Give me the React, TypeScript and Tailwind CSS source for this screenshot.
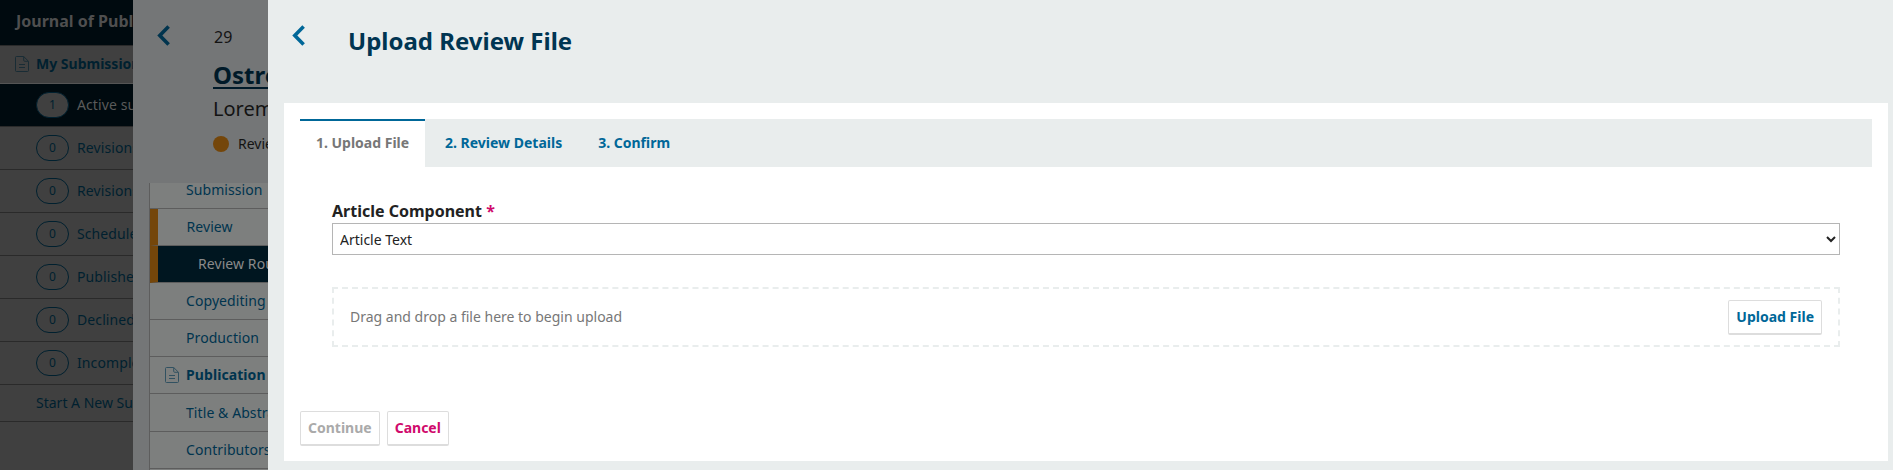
import React from "react";

function ChevronLeft({ className }: { className: string }) {
  return (
    <svg viewBox="0 0 13 21" className={`h-[21px] w-[13px] shrink-0 ${className}`} fill="none" stroke="currentColor" strokeWidth="3.6">
      <path d="M11.6 1.6 2.8 10.5l8.8 8.9" />
    </svg>
  );
}

function DocIcon() {
  return (
    <svg viewBox="0 0 14 16" className="h-4 w-3.5 shrink-0 opacity-60" fill="none" stroke="currentColor" strokeWidth="1">
      <path d="M1.5.5h7.2l4.8 4.8v9.2a1 1 0 0 1-1 1h-11a1 1 0 0 1-1-1v-13a1 1 0 0 1 1-1Z" />
      <path d="M8.7.7v3.6a1 1 0 0 0 1 1h3.6M4 8.5h6M4 11.5h6" />
    </svg>
  );
}

const queues = ["Revisions Requested", "Revisions Submitted", "Scheduled", "Published", "Declined", "Incomplete"];

function Sidebar() {
  return (
    <aside className="h-full w-[133px] shrink-0 overflow-hidden whitespace-nowrap bg-[#404040] text-[#00202f]">
      <div className="flex h-[45px] items-center bg-[#000a0f] pb-[3px] pl-4 text-base font-bold text-[#4f4f4f]">
        Journal of Public Knowledge
      </div>
      <div className="flex h-[38px] items-center border-t border-[#2a2a2a] pb-0.5 pl-[15px] font-bold">
        <DocIcon />
        <span className="pl-[7px]">My Submissions</span>
      </div>
      <div className="flex h-11 items-center border-y border-t-[#555] border-b-[#2a2a2a] bg-[#000a0f] pl-9 text-[#5a5a5a]">
        <span className="flex h-[26px] w-[33px] shrink-0 items-center justify-center rounded-full border border-[#00202f] bg-[#404040] text-xs text-[#00202f]">1</span>
        <span className="pl-2 tracking-[0.1px]">Active submissions</span>
      </div>
      {queues.map((name) => (
        <div key={name} className="flex h-[43px] items-center border-b border-[#2a2a2a] pl-9">
          <span className="flex h-[26px] w-[33px] shrink-0 items-center justify-center rounded-full border border-[#00202f] text-xs">0</span>
          <span className="pl-2 tracking-[0.1px]">{name}</span>
        </div>
      ))}
      <div className="flex h-[37px] items-center border-b border-[#2a2a2a] pl-9">Start A New Submission</div>
    </aside>
  );
}

function SubmissionPanel() {
  return (
    <section className="flex h-full w-[135px] shrink-0 flex-col overflow-hidden whitespace-nowrap bg-[#747677]">
      <header className="flex h-[183px] shrink-0 pl-6">
        <ChevronLeft className="mt-[25px] text-[#00344e]" />
        <div className="pl-[43px] text-[#131313]">
          <div className="mt-[25px] h-6 pl-px text-base leading-6">29</div>
          <div className="mt-2.5 h-8 text-2xl leading-8 font-bold text-[#001a29] underline decoration-2 underline-offset-[3px]">Ostrom</div>
          <div className="mt-1 h-7 text-xl leading-7">Lorem ipsum</div>
          <div className="mt-[11px] flex h-5 items-center gap-[9px]">
            <span className="size-4 shrink-0 rounded-full bg-[#74460a]" />
            Review
          </div>
        </div>
      </header>
      <nav className="ml-4 flex min-h-0 flex-1 flex-col overflow-hidden border-l border-[#5d5d5d] bg-[#7d7f7e] tracking-[0.08px] text-[#00344e]">
        <div className="h-[26px] shrink-0 border-b border-[#5d5d5d] pl-9 leading-[13px]">Submission</div>
        <div className="flex h-[37px] shrink-0 items-center border-b border-l-8 border-b-[#5d5d5d] border-l-[#74460a] pl-[28.5px]">Review</div>
        <div className="flex h-[37px] shrink-0 items-center border-b border-l-8 border-b-[#5d5d5d] border-l-[#74460a] bg-[#001620] pl-10 text-[#8a8a8a]">Review Round 1</div>
        <div className="flex h-[37px] shrink-0 items-center border-b border-[#5d5d5d] pl-9">Copyediting</div>
        <div className="flex h-[37px] shrink-0 items-center border-b border-[#5d5d5d] pl-9">Production</div>
        <div className="flex h-[37px] shrink-0 items-center gap-[7px] border-b border-[#5d5d5d] pl-[15px] font-bold">
          <DocIcon />Publication
        </div>
        <div className="flex h-[38px] shrink-0 items-center border-b border-[#5d5d5d] pl-9">Title &amp; Abstract</div>
        <div className="flex h-[37px] shrink-0 items-center border-b border-[#5d5d5d] pl-9">Contributors</div>
      </nav>
    </section>
  );
}

const buttonBase = "h-[35px] rounded-[2px] border border-b-2 border-[#ddd] bg-white px-[7px] font-bold";

function UploadPanel() {
  return (
    <main className="flex h-full min-w-0 flex-1 flex-col bg-[#e9eded]">
      <header className="flex h-[103px] shrink-0 pl-6">
        <ChevronLeft className="mt-[25px] text-[#006798]" />
        <h1 className="mt-[25px] pl-[43px] text-2xl leading-8 font-bold text-[#003552]">Upload Review File</h1>
      </header>
      <div className="mr-[5px] ml-4 h-[358px] bg-white px-4 pt-4">
        <div className="flex h-12 bg-[#e9eded] font-bold text-[#006798]">
          <button className="h-12 w-[125px] border-t-2 border-[#006798] bg-white pb-0.5 text-[#777]">1. Upload File</button>
          <button className="pl-5">2. Review Details</button>
          <button className="pl-9">3. Confirm</button>
        </div>
        <div className="px-8 pt-8">
          <label htmlFor="component" className="block h-6 text-base leading-6 font-bold text-[#222]">
            Article Component <span className="text-[#d00a6c]">*</span>
          </label>
          <select id="component" className="block h-8 w-full border border-[#b5b5b5] bg-white pl-[3px] text-[#222]">
            <option>Article Text</option>
          </select>
          <div className="mt-8 flex h-[60px] items-center justify-between border-2 border-dashed border-[#e9eded] px-4 text-[#777]">
            <span>Drag and drop a file here to begin upload</span>
            <button className={`${buttonBase} text-[#006798]`}>Upload File</button>
          </div>
        </div>
        <div className="mt-16 flex gap-[7px]">
          <button className={`${buttonBase} text-[#aaa]`}>Continue</button>
          <button className={`${buttonBase} text-[#d00a6c]`}>Cancel</button>
        </div>
      </div>
    </main>
  );
}

export default function App() {
  return (
    <div className="flex h-[470px] w-full overflow-hidden font-['Noto_Sans',sans-serif] text-sm leading-5">
      <Sidebar />
      <SubmissionPanel />
      <UploadPanel />
    </div>
  );
}
